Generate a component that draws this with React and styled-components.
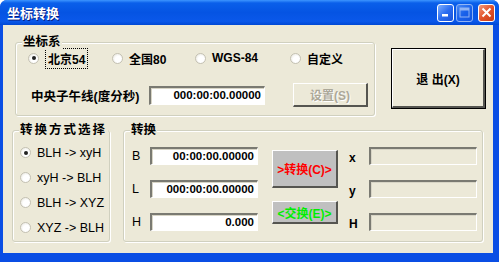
import styled, { createGlobalStyle } from "styled-components";

const GlobalStyle = createGlobalStyle`
  html, body { margin: 0; padding: 0; background: #ffffff; }
  body { font-family: "Liberation Sans", "Noto Sans CJK SC", sans-serif; }
  * { box-sizing: border-box; }
`;

const cjk = `"Liberation Sans", "Noto Sans CJK SC", sans-serif`;

const Window = styled.div`
  width: 499px;
  height: 262px;
  display: flex;
  flex-direction: column;
  background: #0a4ee4;
  border-radius: 7px 7px 0 0;
  overflow: hidden;
`;

const TitleBar = styled.div`
  height: 25px;
  display: flex;
  align-items: center;
  padding: 0 4px 0 7px;
  background: linear-gradient(#3d95ff 0%, #0a5fea 12%, #0554e3 50%, #0a58ea 85%, #0048d4 100%);
`;

const Title = styled.div`
  flex: 1;
  color: #ffffff;
  font-family: ${cjk};
  font-weight: bold;
  font-size: 13px;
  text-shadow: 1px 1px #0a1e80;
`;

const CtrlButton = styled.div`
  width: 17px;
  height: 18px;
  border: 1px solid #ffffff;
  border-radius: 3px;
  display: flex;
  align-items: center;
  justify-content: center;
  background: ${(p) =>
    p.$kind === "close"
      ? "linear-gradient(135deg, #f39a7c, #e2542c 50%, #c73c16)"
      : "linear-gradient(135deg, #7fb0ff, #2a6cf0 50%, #1a52d8)"};
  opacity: ${(p) => (p.$disabled ? 0.55 : 1)};
  margin-left: ${(p) => (p.$kind === "close" ? "5px" : "2px")};
`;

const Body = styled.div`
  flex: 1;
  margin: 0 6px 9px 3px;
  background: #ece9d8;
  padding: 17px 0 0 9px;
  display: flex;
  flex-direction: column;
`;

const Row = styled.div`
  display: flex;
  align-items: flex-start;
`;

const Group = styled.div`
  position: relative;
  width: ${(p) => p.$w}px;
  height: ${(p) => p.$h}px;
  border: 1px solid #d0d0bf;
  border-radius: 3px;
  box-shadow: inset 1px 1px #ffffff, 1px 1px #ffffff;
  padding: ${(p) => p.$pad || "0"};
`;

const Legend = styled.span`
  position: absolute;
  top: -8px;
  left: ${(p) => p.$left || 6}px;
  padding: 0 1px;
  background: #ece9d8;
  font-family: ${cjk};
  font-weight: bold;
  font-size: 12.5px;
  line-height: 14px;
  letter-spacing: ${(p) => p.$spacing || 0}px;
  color: #000000;
`;

const RadioRow = styled.div`
  display: flex;
  align-items: center;
  height: 16px;
`;

const RadioItem = styled.label`
  display: flex;
  align-items: center;
  width: ${(p) => (p.$w ? `${p.$w}px` : "auto")};
  height: ${(p) => (p.$h ? `${p.$h}px` : "auto")};
  font-family: ${cjk};
  font-size: ${(p) => (p.$bold ? "12px" : "12.5px")};
  font-weight: ${(p) => (p.$bold ? "bold" : "normal")};
  color: #000000;
`;

const RadioDot = styled.span`
  width: 11px;
  height: 11px;
  border-radius: 50%;
  border: 1px solid #c4c1b3;
  background: radial-gradient(circle at 60% 60%, #ffffff 40%, #e4e2d8);
  display: flex;
  align-items: center;
  justify-content: center;
  margin-right: ${(p) => p.$gap || 6}px;
  flex-shrink: 0;
  &::after {
    content: "";
    width: 4px;
    height: 4px;
    border-radius: 50%;
    background: ${(p) => (p.$checked ? "#222222" : "transparent")};
  }
`;

const FocusText = styled.span`
  outline: 1px dotted #000000;
  outline-offset: 1px;
  padding: 0 1px;
`;

const Label = styled.span`
  font-family: ${cjk};
  font-size: ${(p) => p.$size || 12}px;
  font-weight: ${(p) => (p.$bold ? "bold" : "normal")};
  width: ${(p) => (p.$w ? `${p.$w}px` : "auto")};
  padding-top: ${(p) => p.$pt || 0}px;
  color: #000000;
  flex-shrink: 0;
`;

const TextBox = styled.div`
  width: ${(p) => p.$w}px;
  height: ${(p) => p.$h || 18}px;
  background: ${(p) => (p.$disabled ? "#ece9d8" : "#ffffff")};
  border-top: 2px solid #7a7a72;
  border-left: 2px solid #7a7a72;
  border-right: 1px solid #ffffff;
  border-bottom: 1px solid #ffffff;
  box-shadow: 1px 1px 0 #d8d5c6 inset;
  font-family: "Liberation Sans", sans-serif;
  font-weight: bold;
  font-size: 11.5px;
  color: #000000;
  text-align: right;
  padding-right: 3px;
  line-height: 15px;
  flex-shrink: 0;
`;

const Button = styled.button`
  width: ${(p) => p.$w}px;
  height: ${(p) => p.$h}px;
  padding: 0;
  background: ${(p) => p.$bg || "#ece9d8"};
  border-top: 1px solid #ffffff;
  border-left: 1px solid #ffffff;
  border-right: 2px solid #555550;
  border-bottom: 2px solid #555550;
  outline: ${(p) => (p.$default ? "1px solid #000000" : "none")};
  font-family: ${cjk};
  font-weight: bold;
  font-size: 12px;
  color: ${(p) => p.$color || "#000000"};
  text-shadow: ${(p) => (p.$disabled ? "1px 1px #ffffff" : "none")};
  flex-shrink: 0;
`;

const Column = styled.div`
  display: flex;
  flex-direction: column;
  gap: ${(p) => p.$gap || 0}px;
  margin-left: ${(p) => p.$ml || 0}px;
  margin-top: ${(p) => p.$mt || 0}px;
`;

const FieldRow = styled.div`
  display: flex;
  align-items: center;
`;

function Radio({ checked, children, w, h, bold, gap }) {
  return (
    <RadioItem $w={w} $h={h} $bold={bold}>
      <RadioDot $checked={checked} $gap={gap} />
      {children}
    </RadioItem>
  );
}

export default function App() {
  return (
    <>
      <GlobalStyle />
      <Window>
        <TitleBar>
          <Title>坐标转换</Title>
          <CtrlButton>
            <svg width="9" height="9" viewBox="0 0 9 9">
              <rect x="1" y="6" width="6" height="2.5" fill="#ffffff" />
            </svg>
          </CtrlButton>
          <CtrlButton $disabled>
            <svg width="11" height="11" viewBox="0 0 11 11">
              <rect x="1" y="1" width="9" height="9" fill="none" stroke="#ffffff" strokeWidth="1" />
              <rect x="1" y="1" width="9" height="2.5" fill="#ffffff" />
            </svg>
          </CtrlButton>
          <CtrlButton $kind="close">
            <svg width="11" height="11" viewBox="0 0 11 11">
              <path d="M1.5 1.5 L9.5 9.5 M9.5 1.5 L1.5 9.5" stroke="#ffffff" strokeWidth="2" />
            </svg>
          </CtrlButton>
        </TitleBar>
        <Body>
          <Row style={{ marginLeft: 3 }}>
            <Group $w={360} $h={74} $pad="7px 0 0 12px">
              <Legend $left={6}>坐标系</Legend>
              <RadioRow>
                <Radio checked w={84} bold gap={8}>
                  <FocusText>北京54</FocusText>
                </Radio>
                <Radio w={83} bold>全国80</Radio>
                <Radio w={95} bold>WGS-84</Radio>
                <Radio bold>自定义</Radio>
              </RadioRow>
              <FieldRow style={{ marginTop: 17, marginLeft: 3 }}>
                <Label $bold $w={118} $size={12.5}>中央子午线(度分秒)</Label>
                <TextBox $w={116} $h={19}>000:00:00.00000</TextBox>
                <Button $w={75} $h={24} $disabled $color="#aca899" style={{ marginLeft: 28 }}>
                  设置(S)
                </Button>
              </FieldRow>
            </Group>
            <Button $w={93} $h={59} $default style={{ marginLeft: 17, marginTop: 7 }}>
              退 出(X)
            </Button>
          </Row>
          <Row style={{ marginTop: 14, gap: 13 }}>
            <Group $w={98} $h={112} $pad="9px 0 0 7px">
              <Legend $left={6} $spacing={2}>转换方式选择</Legend>
              <Column>
                <Radio checked h={25}>BLH -&gt; xyH</Radio>
                <Radio h={25}>xyH -&gt; BLH</Radio>
                <Radio h={25}>BLH -&gt; XYZ</Radio>
                <Radio h={25}>XYZ -&gt; BLH</Radio>
              </Column>
            </Group>
            <Group $w={360} $h={112} $pad="16px 0 0 8px">
              <Legend $left={6}>转换</Legend>
              <Row>
                <Column $gap={15}>
                  <FieldRow>
                    <Label $w={18} $size={12.5}>B</Label>
                    <TextBox $w={108}>00:00:00.00000</TextBox>
                  </FieldRow>
                  <FieldRow>
                    <Label $w={18} $size={12.5}>L</Label>
                    <TextBox $w={108}>000:00:00.00000</TextBox>
                  </FieldRow>
                  <FieldRow>
                    <Label $w={18} $size={12.5}>H</Label>
                    <TextBox $w={108}>0.000</TextBox>
                  </FieldRow>
                </Column>
                <Column $gap={13} $ml={14} $mt={3}>
                  <Button $w={66} $h={38} $bg="#c0c0c0" $color="#ff0000">
                    &gt;转换(C)&gt;
                  </Button>
                  <Button $w={66} $h={23} $bg="#c0c0c0" $color="#00ee00">
                    &lt;交换(E)&gt;
                  </Button>
                </Column>
                <Column $gap={15} $ml={11}>
                  <FieldRow>
                    <Label $w={20} $bold $pt={3}>x</Label>
                    <TextBox $w={108} $disabled />
                  </FieldRow>
                  <FieldRow>
                    <Label $w={20} $bold $pt={3}>y</Label>
                    <TextBox $w={108} $disabled />
                  </FieldRow>
                  <FieldRow>
                    <Label $w={20} $bold $pt={3}>H</Label>
                    <TextBox $w={108} $disabled />
                  </FieldRow>
                </Column>
              </Row>
            </Group>
          </Row>
        </Body>
      </Window>
    </>
  );
}
